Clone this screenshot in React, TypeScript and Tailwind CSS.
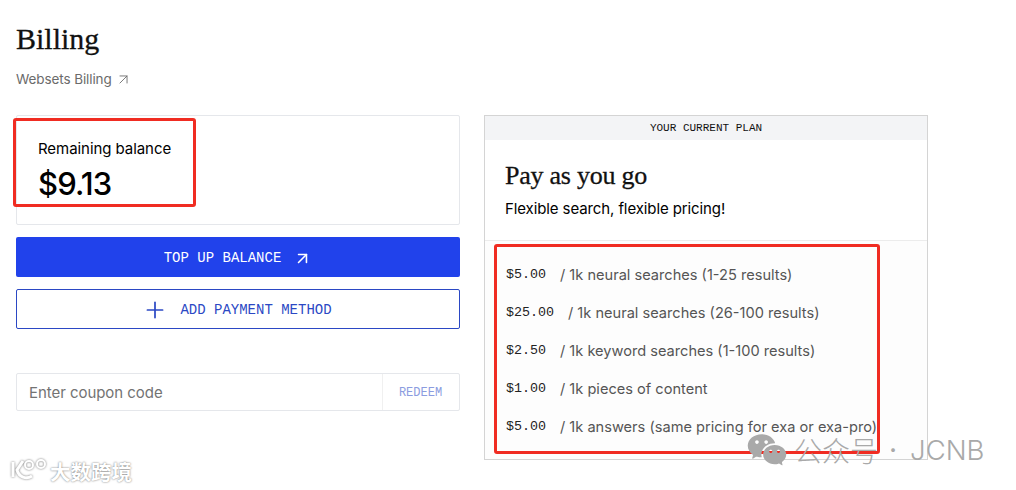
import { ArrowUpRight, Plus } from 'lucide-react';
import { RiWechatFill } from 'react-icons/ri';

const sans = "font-['Inter','Liberation_Sans',sans-serif]";
const serif = "font-['Liberation_Serif',serif] [-webkit-text-stroke:0.3px_#111]";
const mono = "font-['Liberation_Mono','Noto_Sans_CJK_SC',monospace]";

const prices = [
  { price: '$5.00', label: '/ 1k neural searches (1-25 results)' },
  { price: '$25.00', label: '/ 1k neural searches (26-100 results)' },
  { price: '$2.50', label: '/ 1k keyword searches (1-100 results)' },
  { price: '$1.00', label: '/ 1k pieces of content' },
  { price: '$5.00', label: '/ 1k answers (same pricing for exa or exa-pro)' },
];

export default function App() {
  return (
    <div className={`relative h-[490px] w-[1016px] overflow-hidden bg-white pl-4 pt-[20px] ${sans}`}>
      {/* Header */}
      <h1 className={`text-[30px] leading-[38px] text-[#111] ${serif}`}>Billing</h1>
      <a className="mt-[11px] flex h-5 items-center gap-[3px] text-[13.5px] tracking-[-0.1px] text-[#6b6b6b]">
        Websets Billing
        <ArrowUpRight className="h-[17px] w-[17px]" strokeWidth={1.25} />
      </a>

      <div className="mt-[26px] flex items-start gap-6">
        {/* Left column */}
        <div className="flex w-[444px] flex-col">
          <div className="h-[110px] rounded-[2px] border border-[#e5e7eb] px-[21px] pt-[23px]">
            <div className="text-[15px] leading-5 tracking-[-0.06px] text-black">Remaining balance</div>
            <div className="mt-[7px] text-[31px] leading-9 font-medium tracking-[-0.9px] text-black">$9.13</div>
          </div>

          <button className={`mt-3 flex h-10 items-center justify-center gap-[12px] rounded-[2px] bg-[#2142eb] pt-[2px] text-[14px] text-white ${mono}`}>
            TOP UP BALANCE
            <ArrowUpRight className="h-[19px] w-[19px]" strokeWidth={2} />
          </button>

          <button className={`mt-3 flex h-10 items-center justify-center gap-[12px] rounded-[2px] border border-[#2b48c4] pr-[2px] pt-[2px] text-[14px] text-[#2b48c4] ${mono}`}>
            <Plus className="h-[26px] w-[26px]" strokeWidth={1.6} />
            ADD PAYMENT METHOD
          </button>

          <div className="mt-11 flex h-[38px] rounded-[2px] border border-[#e5e7eb]">
            <div className="flex flex-1 items-center pl-[12px] pt-[2px] text-[15px] tracking-[-0.05px] text-[#737373]">Enter coupon code</div>
            <div className={`flex w-[77px] items-center justify-center border-l border-[#f0f0f0] pr-[1px] pt-[2px] text-[12px] text-[#8b9ce0] ${mono}`}>
              REDEEM
            </div>
          </div>
        </div>

        {/* Plan card */}
        <div className="h-[345px] w-[444px] border border-[#d4d4d4]">
          <div className={`flex h-6 items-center justify-center bg-[#f3f4f6] text-[11px] text-[#111] ${mono}`}>
            YOUR CURRENT PLAN
          </div>
          <div className="h-[101px] border-b border-[#ececec] px-[20px] pt-[20px]">
            <div className={`text-[26px] leading-8 tracking-[-0.25px] text-[#111] ${serif}`}>Pay as you go</div>
            <div className="mt-[7px] text-[15px] leading-5 tracking-[-0.1px] text-black">Flexible search, flexible pricing!</div>
          </div>
          <div className="flex h-[218px] flex-col gap-[18px] bg-[#fdfdfd] pl-[21px] pt-6">
            {prices.map((row, i) => (
              <div key={i} className="flex h-5 items-center gap-[14px] text-[14.6px] leading-5 text-[#555]">
                <span className={`text-[13.33px] leading-5 text-[#222] ${mono}`}>{row.price}</span>
                <span>{row.label}</span>
              </div>
            ))}
          </div>
        </div>
      </div>

      {/* Red annotation boxes */}
      <div className="absolute left-[13px] top-[118px] h-[89px] w-[183px] rounded-[3px] border-[3px] border-[#f02c22]" />
      <div className="absolute left-[494px] top-[244px] h-[210px] w-[386px] rounded-[3px] border-[3px] border-[#f02c22]" />

      {/* Watermarks */}
      <div className="absolute left-[746px] top-[429px] flex items-center text-[#a9a9a9]">
        <RiWechatFill className="h-[42px] w-[42px]" />
        <span className="ml-[6px] font-['Noto_Sans_CJK_SC',sans-serif] text-[28px] leading-7 font-light">公众号</span>
        <span className="ml-[11px] text-[28px] leading-7">·</span>
        <span className="ml-[13px] text-[27.5px] leading-7 font-light">JCNB</span>
      </div>
      <div className="absolute left-[9px] top-[458px] flex items-center gap-[3px]">
        <svg width="38" height="26" viewBox="0 0 38 26" fill="none" stroke="#fff" strokeWidth="2" className="drop-shadow-[0_0_1px_#777]">
          <path d="M4 4v15M14 3l-6 9c2 7 9 10 15 6" strokeWidth="3" />
          <circle cx="20" cy="7" r="4" />
          <circle cx="32" cy="6" r="4" />
        </svg>
        <span className="font-['Noto_Sans_CJK_SC',sans-serif] text-[20.5px] leading-6 font-bold text-white [text-shadow:0_0_2px_#666]">大数跨境</span>
      </div>
    </div>
  );
}
